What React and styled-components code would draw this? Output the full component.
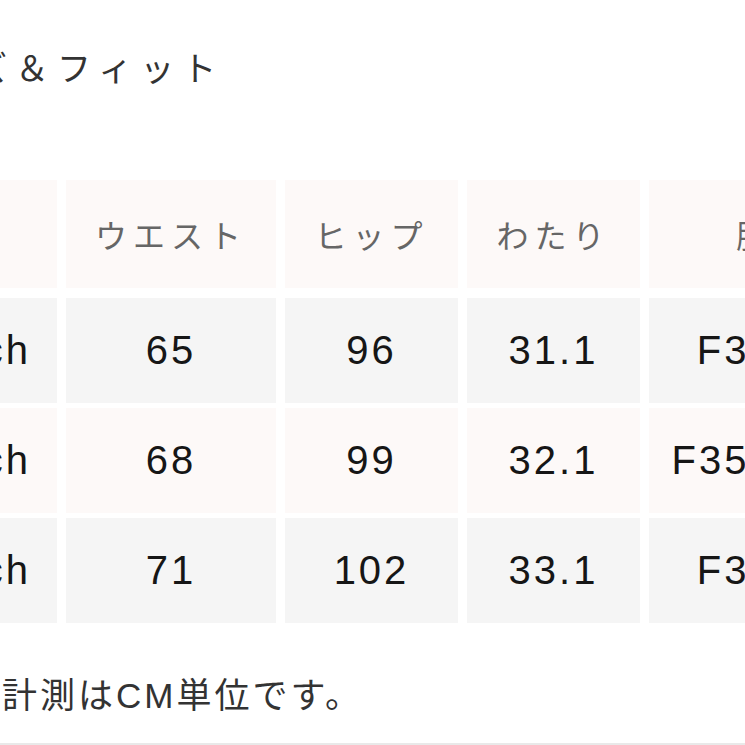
import styled, { createGlobalStyle } from 'styled-components'

const GlobalStyle = createGlobalStyle`
  html, body {
    margin: 0;
    padding: 0;
    background: #ffffff;
  }
  body {
    font-family: "Noto Sans CJK JP", "Noto Sans", sans-serif;
    overflow: hidden;
  }
`

const Page = styled.div`
  width: 745px;
  height: 745px;
  overflow: hidden;
  display: flex;
  flex-direction: column;
`

const Content = styled.div`
  margin-left: -114px;
  padding-top: 47px;
  display: flex;
  flex-direction: column;
`

const Title = styled.h2`
  margin: 0;
  padding-left: 4px;
  font-size: 34px;
  line-height: 40px;
  font-weight: 400;
  letter-spacing: 8px;
  color: #333333;
  white-space: nowrap;
`

const Table = styled.div`
  margin: 93px 0 0 -17px;
  display: grid;
  grid-template-columns: 188px 210px 173px 173px 250px;
  column-gap: 9px;
  row-gap: 5px;
`

const Cell = styled.div`
  height: ${(p) => (p.$head ? '108px' : '105px')};
  margin-bottom: ${(p) => (p.$head ? '5px' : '0')};
  display: flex;
  align-items: center;
  justify-content: center;
  background: ${(p) => (p.$tone === 'pink' ? '#fdf9f8' : '#f5f5f5')};
  color: ${(p) => (p.$head ? '#666666' : '#161616')};
  font-family: ${(p) =>
    p.$head
      ? '"Noto Sans CJK JP", sans-serif'
      : '"Liberation Sans", "Noto Sans CJK JP", sans-serif'};
  font-size: ${(p) => (p.$head ? '32px' : '40px')};
  letter-spacing: ${(p) => (p.$head ? '6px' : '3px')};
  white-space: nowrap;
`

const Note = styled.p`
  margin: 53px 0 0;
  padding-left: 2px;
  font-family: "Liberation Sans", "Noto Sans CJK JP", sans-serif;
  font-size: 35px;
  line-height: 40px;
  letter-spacing: 3px;
  color: #333333;
  white-space: nowrap;
`

const Rule = styled.div`
  margin-top: 27px;
  height: 2px;
  background: #e9e9e9;
`

const headers = ['', 'ウエスト', 'ヒップ', 'わたり', '股下']

const rows = [
  ['25inch', '65', '96', '31.1', 'F34.5in'],
  ['26inch', '68', '99', '32.1', 'F35.125in'],
  ['27inch', '71', '102', '33.1', 'F35.5in'],
]

export default function App() {
  return (
    <Page>
      <GlobalStyle />
      <Content>
        <Title>サイズ＆フィット</Title>
        <Table>
          {headers.map((h, j) => (
            <Cell key={`h-${j}`} $head $tone="pink">
              {h}
            </Cell>
          ))}
          {rows.map((row, i) =>
            row.map((v, j) => (
              <Cell key={`${i}-${j}`} $tone={i === 1 ? 'pink' : 'grey'}>
                {v}
              </Cell>
            ))
          )}
        </Table>
        <Note>製品の計測はCM単位です。</Note>
      </Content>
      <Rule />
    </Page>
  )
}
